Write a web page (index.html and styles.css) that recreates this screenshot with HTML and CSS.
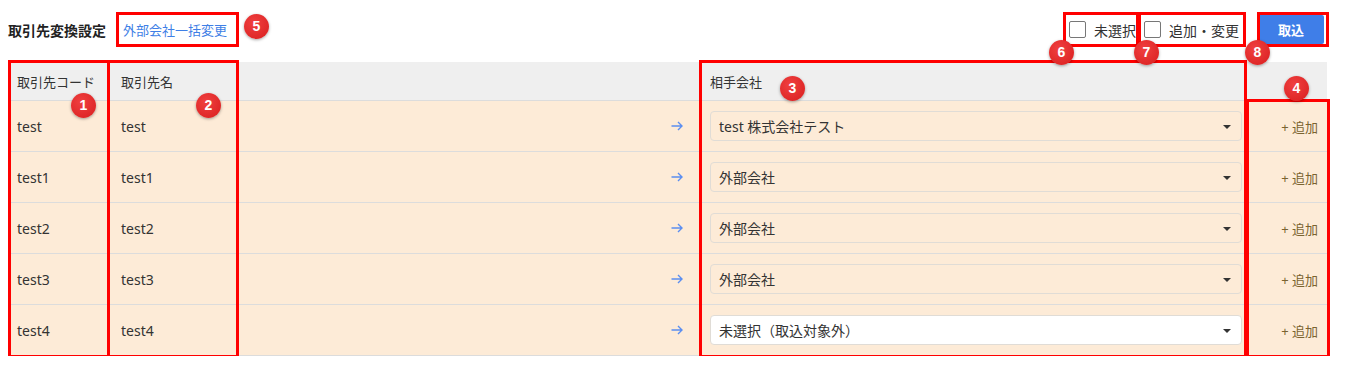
FILE: index.html
```html
<!DOCTYPE html>
<html lang="ja">

<head>
    <meta charset="UTF-8">
    <meta name="viewport" content="width=device-width, initial-scale=1.0">
    <title>取引先変換設定</title>
    <link rel="stylesheet" href="styles.css">
</head>

<body>
    <div class="page">
        <div class="toolbar">
            <h1>取引先変換設定</h1>
            <a class="bulk-link" href="#">外部会社一括変更</a>
            <div class="spacer"></div>
            <label class="check check-unselected"><span class="box"></span>未選択</label>
            <label class="check check-changed"><span class="box"></span>追加・変更</label>
            <button class="import">取込</button>
        </div>

        <table class="partners">
            <thead>
                <tr>
                    <th class="col-code">取引先コード</th>
                    <th class="col-name">取引先名</th>
                    <th class="col-arrow"></th>
                    <th class="col-company">相手会社</th>
                    <th class="col-add"></th>
                </tr>
            </thead>
            <tbody>
                <tr>
                    <td class="col-code">test</td>
                    <td class="col-name">test</td>
                    <td class="col-arrow"><svg class="arrow" width="12" height="10" viewBox="0 0 12 10"><path d="M0.5 5H11M7 1L11 5L7 9" /></svg></td>
                    <td class="col-company"><div class="select">test 株式会社テスト<span class="caret"></span></div></td>
                    <td class="col-add"><a href="#" class="add">+ 追加</a></td>
                </tr>
                <tr>
                    <td class="col-code">test1</td>
                    <td class="col-name">test1</td>
                    <td class="col-arrow"><svg class="arrow" width="12" height="10" viewBox="0 0 12 10"><path d="M0.5 5H11M7 1L11 5L7 9" /></svg></td>
                    <td class="col-company"><div class="select">外部会社<span class="caret"></span></div></td>
                    <td class="col-add"><a href="#" class="add">+ 追加</a></td>
                </tr>
                <tr>
                    <td class="col-code">test2</td>
                    <td class="col-name">test2</td>
                    <td class="col-arrow"><svg class="arrow" width="12" height="10" viewBox="0 0 12 10"><path d="M0.5 5H11M7 1L11 5L7 9" /></svg></td>
                    <td class="col-company"><div class="select">外部会社<span class="caret"></span></div></td>
                    <td class="col-add"><a href="#" class="add">+ 追加</a></td>
                </tr>
                <tr>
                    <td class="col-code">test3</td>
                    <td class="col-name">test3</td>
                    <td class="col-arrow"><svg class="arrow" width="12" height="10" viewBox="0 0 12 10"><path d="M0.5 5H11M7 1L11 5L7 9" /></svg></td>
                    <td class="col-company"><div class="select">外部会社<span class="caret"></span></div></td>
                    <td class="col-add"><a href="#" class="add">+ 追加</a></td>
                </tr>
                <tr>
                    <td class="col-code">test4</td>
                    <td class="col-name">test4</td>
                    <td class="col-arrow"><svg class="arrow" width="12" height="10" viewBox="0 0 12 10"><path d="M0.5 5H11M7 1L11 5L7 9" /></svg></td>
                    <td class="col-company"><div class="select empty">未選択（取込対象外）<span class="caret"></span></div></td>
                    <td class="col-add"><a href="#" class="add">+ 追加</a></td>
                </tr>
            </tbody>
        </table>

        <!-- 説明用の注釈 -->
        <div class="frame frame-1"></div>
        <div class="frame frame-2"></div>
        <div class="frame frame-3"></div>
        <div class="frame frame-4"></div>
        <div class="frame frame-5"></div>
        <div class="frame frame-6"></div>
        <div class="frame frame-7"></div>
        <div class="frame frame-8"></div>

        <span class="badge badge-1">1</span>
        <span class="badge badge-2">2</span>
        <span class="badge badge-3">3</span>
        <span class="badge badge-4">4</span>
        <span class="badge badge-5">5</span>
        <span class="badge badge-6">6</span>
        <span class="badge badge-7">7</span>
        <span class="badge badge-8">8</span>
    </div>
</body>

</html>
```

FILE: styles.css
```css
body {
    font-family: "Noto Sans", "Noto Sans CJK JP", sans-serif;
    margin: 0;
    padding: 0;
    background-color: #fff;
    color: #333;
}

.page {
    position: relative;
    padding: 0 20px 0 10px;
    width: 1317px;
}

.toolbar {
    display: flex;
    align-items: center;
    height: 29px;
    padding-top: 15px;
}

h1 {
    font-size: 14px;
    font-weight: bold;
    margin: 0 0 0 -2px;
    color: #222;
}

.bulk-link {
    margin-left: 17px;
    font-size: 13px;
    color: #3f7fe6;
    text-decoration: none;
}

.spacer {
    flex: 1;
}

.check {
    display: flex;
    align-items: center;
    font-size: 14px;
    color: #333;
}

.check .box {
    width: 15px;
    height: 15px;
    border: 1.5px solid #777;
    border-radius: 2px;
    margin-right: 8px;
}

.check-unselected {
    margin-right: 8px;
}

.check-changed {
    margin-right: 19px;
}

button.import {
    width: 66px;
    height: 29px;
    border: none;
    border-radius: 2px;
    background-color: #3f7ee8;
    color: #fff;
    font-family: inherit;
    font-size: 13px;
    font-weight: bold;
    margin-right: 3px;
}

.partners {
    margin-top: 18px;
    border-collapse: collapse;
    width: 1317px;
    table-layout: fixed;
}

.partners th {
    height: 38px;
    padding: 0;
    background-color: #efefef;
    font-size: 13px;
    font-weight: normal;
    text-align: left;
    color: #333;
    border-bottom: 1px solid #dcdcdc;
}

.partners td {
    height: 50px;
    padding: 0;
    background-color: #fdebd7;
    border-bottom: 1px solid #dcdcdc;
    font-size: 14px;
    color: #333;
}

.partners .col-code {
    width: 91px;
    padding-left: 7px;
}

.partners .col-name {
    width: 117px;
    padding-left: 13px;
}

.partners .col-arrow {
    width: 445px;
    padding-right: 17px;
    text-align: right;
}

.arrow {
    display: inline-block;
    vertical-align: middle;
    position: relative;
    top: -2px;
    fill: none;
    stroke: #5b8ef0;
    stroke-width: 1.4;
}

.partners .col-company {
    width: 537px;
    padding-left: 10px;
}

.partners td.col-company {
    padding-right: 5px;
}

.select {
    position: relative;
    height: 30px;
    line-height: 30px;
    border: 1px solid #e0dcd6;
    border-radius: 4px;
    padding-left: 8px;
    font-size: 14px;
    color: #333;
    box-sizing: border-box;
}

.select.empty {
    background-color: #fff;
}

.caret {
    position: absolute;
    right: 10px;
    top: 13px;
    border-left: 4px solid transparent;
    border-right: 4px solid transparent;
    border-top: 4px solid #333;
}

.partners .col-add {
    width: 71px;
    padding-right: 9px;
    text-align: right;
}

.add {
    font-size: 13px;
    color: #7a6330;
    text-decoration: none;
}

/* 注釈の赤枠 */
.frame {
    position: absolute;
    border: 3px solid #ff0000;
    box-sizing: border-box;
}

.frame-1 { left: 8px; top: 60px; width: 102px; height: 298px; }
.frame-2 { left: 107px; top: 60px; width: 132px; height: 298px; }
.frame-3 { left: 699px; top: 60px; width: 548px; height: 298px; }
.frame-4 { left: 1246px; top: 99px; width: 84px; height: 259px; }
.frame-5 { left: 116px; top: 12px; width: 123px; height: 35px; }
.frame-6 { left: 1063px; top: 12px; width: 76px; height: 35px; }
.frame-7 { left: 1138px; top: 12px; width: 108px; height: 35px; }
.frame-8 { left: 1257px; top: 12px; width: 72px; height: 35px; }

.badge {
    position: absolute;
    width: 25px;
    height: 25px;
    margin: -12px 0 0 -12px;
    border-radius: 50%;
    background: radial-gradient(circle at 40% 35%, #f04040, #d81e1e);
    box-shadow: 0 1px 3px rgba(0, 0, 0, 0.35);
    color: #fff;
    font-family: "Liberation Sans", Arial, sans-serif;
    font-size: 14px;
    font-weight: bold;
    line-height: 25px;
    text-align: center;
}

.badge-1 { left: 83px; top: 105px; }
.badge-2 { left: 208px; top: 105px; }
.badge-3 { left: 792px; top: 88px; }
.badge-4 { left: 1296px; top: 88px; }
.badge-5 { left: 256px; top: 26px; }
.badge-6 { left: 1061px; top: 52px; }
.badge-7 { left: 1146px; top: 52px; }
.badge-8 { left: 1257px; top: 52px; }
```
